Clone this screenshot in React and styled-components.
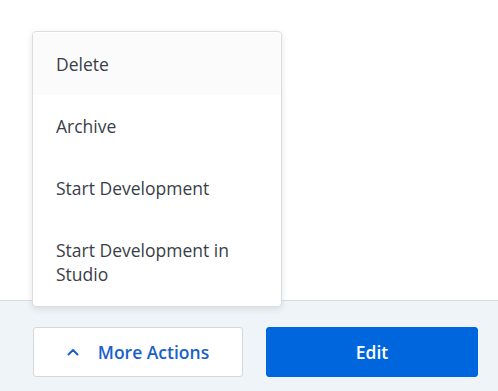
import React, { useState } from "react";
import styled, { createGlobalStyle } from "styled-components";

const GlobalStyle = createGlobalStyle`
  html, body {
    margin: 0;
    padding: 0;
    background: #ffffff;
    font-family: "Open Sans", "Noto Sans", sans-serif;
  }
  * { box-sizing: border-box; }
`;

const Page = styled.div`
  width: 498px;
  height: 391px;
  display: flex;
  flex-direction: column;
  overflow: hidden;
`;

const Content = styled.div`
  height: 300px;
  background: #ffffff;
`;

const Footer = styled.footer`
  flex: 1;
  background: #eff4f8;
  border-top: 1px solid #d9dee4;
  display: flex;
  align-items: flex-start;
  gap: 23px;
  padding: 26px 20px 0 33px;
`;

const ActionWrap = styled.div`
  position: relative;
  width: 210px;
`;

const Button = styled.button`
  height: 50px;
  width: ${({ $width }) => $width}px;
  display: flex;
  align-items: center;
  justify-content: center;
  gap: 19px;
  border-radius: 3px;
  font-family: inherit;
  font-size: 17.5px;
  font-weight: 600;
  cursor: pointer;
  border: 1px solid ${({ $primary }) => ($primary ? "#0066de" : "#d3d8de")};
  background: ${({ $primary }) => ($primary ? "#0066de" : "#ffffff")};
  color: ${({ $primary }) => ($primary ? "#ffffff" : "#1a62c9")};
`;

const Menu = styled.ul`
  position: absolute;
  left: -1px;
  bottom: calc(100% + 20px);
  width: 250px;
  margin: 0;
  padding: 1px 0;
  list-style: none;
  background: #ffffff;
  border: 1px solid #dadde2;
  border-radius: 4px;
  box-shadow: 0 2px 6px rgba(30, 40, 60, 0.12);
`;

const MenuItem = styled.li`
  padding: 19px 23px;
  font-size: 17.5px;
  line-height: 24px;
  color: #393e48;
  cursor: pointer;
  background: ${({ $active }) => ($active ? "#fbfbfb" : "transparent")};
`;

const Chevron = () => (
  <svg width="12" height="8" viewBox="0 0 12 8" fill="none">
    <path d="M1.5 6.5L6 2L10.5 6.5" stroke="#1a62c9" strokeWidth="2" strokeLinecap="round" strokeLinejoin="round" />
  </svg>
);

const items = ["Delete", "Archive", "Start Development", "Start Development in Studio"];

export default function App() {
  const [open, setOpen] = useState(true);

  return (
    <Page>
      <GlobalStyle />
      <Content />
      <Footer>
        <ActionWrap>
          {open && (
            <Menu>
              {items.map((label, i) => (
                <MenuItem key={label} $active={i === 0}>{label}</MenuItem>
              ))}
            </Menu>
          )}
          <Button $width={210} onClick={() => setOpen((v) => !v)}>
            <Chevron />
            More Actions
          </Button>
        </ActionWrap>
        <Button $primary $width={212}>Edit</Button>
      </Footer>
    </Page>
  );
}
